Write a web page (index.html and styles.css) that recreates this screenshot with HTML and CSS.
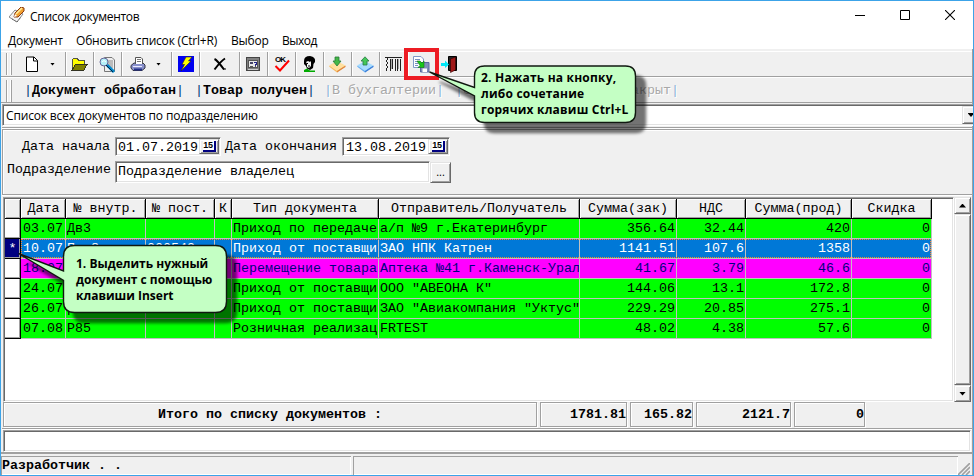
FILE: index.html
```
<!DOCTYPE html>
<html lang="ru">
<head>
    <meta charset="UTF-8">
    <title>Список документов</title>
    <link rel="stylesheet" href="styles.css">
</head>
<body>
    <div class="window">
        <!-- Title bar -->
        <header class="title-bar">
            <svg class="app-icon" width="16" height="16" viewBox="0 0 16 16">
                <path d="M0 10 6 3 14 7 8 15Z" fill="#f4f4f4" stroke="#8a8a8a"/>
                <path d="M3 12 8 15 12 10" fill="none" stroke="#555" stroke-dasharray="1 1"/>
                <path d="M5 10 6 6 12 0 15 1 15 4 9 10Z" fill="#f0a030" stroke="#8b3a10"/>
                <path d="M7 7 13 1" stroke="#fff0a0" stroke-width="1.5"/>
                <path d="M5 10 6 7 8 9Z" fill="#fff"/>
            </svg>
            <h1>Список документов</h1>
            <div class="win-buttons">
                <svg width="10" height="10" viewBox="0 0 10 10"><path d="M0 5.5H10" stroke="#000"/></svg>
                <svg width="10" height="10" viewBox="0 0 10 10"><path d="M.5 .5H9.5V9.5H.5Z" fill="none" stroke="#000"/></svg>
                <svg width="10" height="10" viewBox="0 0 10 10"><path d="M0 0 10 10M10 0 0 10" stroke="#000" stroke-width="1.1"/></svg>
            </div>
        </header>

        <nav class="menu">
            <span class="m-doc">Документ</span>
            <span class="m-refresh">Обновить список (Ctrl+R)</span>
            <span class="m-select">Выбор</span>
            <span class="m-exit">Выход</span>
        </nav>

        <main class="client">
            <!-- Icon toolbar -->
            <div class="toolbar">
                <i class="grip"></i>
                <div class="tool first">
                    <svg width="14" height="17" viewBox="0 0 14 17"><path d="M1.5 1H9L12.5 4.5V15.5H1.5Z" fill="#fff" stroke="#000"/><path d="M8.500 1V5H12.500" fill="none" stroke="#000"/></svg>
                    <i class="caret"></i>
                </div>
                <div class="tool">
                    <svg width="17" height="16" viewBox="0 0 17 16" shape-rendering="crispEdges"><path d="M1 13.500V4L3 2.500H6L8 4.500H13V8" fill="#ff0" stroke="#554"/><path d="M1 14 4.500 8.500H16L13 14Z" fill="#808000" stroke="#332"/></svg>
                </div>
                <div class="tool">
                    <svg width="17" height="17" viewBox="0 0 17 17"><path d="M5.500 1.500H13L15.500 4V15.500H5.500Z" fill="#eee" stroke="#777"/><path d="M8 5H14M8 7H14M8 9H14M8 11H14" stroke="#888"/><circle cx="5" cy="6" r="4" fill="#b4f0f8" stroke="#669"/><path d="M3 6Q5 3 7 6" stroke="#fff" fill="none"/><path d="M8 9 15 16" stroke="#08c" stroke-width="3"/><path d="M7 9 14 16" stroke="#024" stroke-width="1"/></svg>
                </div>
                <div class="tool print">
                    <svg width="16" height="16" viewBox="0 0 16 16"><path d="M1 9.500 4 7H13L15 9V12L12 14.500H3L1 12Z" fill="#8890cc" stroke="#334"/><path d="M5.500 8V1.500H11L12.500 3V8" fill="#fff" stroke="#555"/><path d="M7 3.500H11M7 5.500H11" stroke="#777"/><path d="M3 10.500H12" stroke="#e8e8ff"/><path d="M4 13.500H12" stroke="#223088" stroke-width="2"/></svg>
                    <i class="caret"></i>
                </div>
                <div class="tool">
                    <svg width="16" height="16" viewBox="0 0 16 16"><path d="M0 0H16V16H0Z" fill="#0000f0"/><path d="M8 1H14L10.500 5H13L3 15 6.500 8.500H4Z" fill="#ff0" stroke="#222" stroke-width=".6"/></svg>
                </div>
                <div class="tool wide">
                    <svg width="14" height="14" viewBox="0 0 14 14"><path d="M1.500 2Q4 3 11 12.500M12 1.500Q8 4 1.500 12.500" fill="none" stroke="#000" stroke-width="2"/><path d="M10 12H13" stroke="#000"/></svg>
                </div>
                <div class="tool">
                    <svg width="15" height="15" viewBox="0 0 15 15" shape-rendering="crispEdges"><path d="M.5 .5H13.500V13.500H.5Z" fill="#808080" stroke="#444"/><path d="M2.500 3.500H11.500V10.500H2.500Z" fill="#e8e8e8" stroke="#555"/><path d="M4 5H7V7H4Z" fill="#446"/><path d="M4 9H7M9 9H10" stroke="#555"/><path d="M8 5.500H10.500V7H9V8.500" fill="none" stroke="#228"/><path d="M2 12H12" stroke="#ccc"/></svg>
                </div>
                <div class="tool">
                    <svg width="16" height="18" viewBox="0 0 16 18"><text class="ok" x="1" y="7">OK</text><path d="M1.500 11 6 15.500 15 5.500" fill="none" stroke="red" stroke-width="2"/></svg>
                </div>
                <div class="tool">
                    <svg width="14" height="16" viewBox="0 0 14 16"><path d="M1 5Q1 0 7 0Q13 1 12 6L10.500 8 10 12 7 14 4 12.500 3 10 1 8Z" fill="#000"/><path d="M3 6 5 5 7 6 8 5 8 10 6 12 4 11 4 8Z" fill="#f4f4f4"/><path d="M3.500 7.500H5M5 10H7" stroke="#000"/><path d="M1 15.500V14L4 12.500 7 14.500H12V16H1Z" fill="#0a0"/></svg>
                </div>
                <div class="tool">
                    <svg width="17" height="17" viewBox="0 0 17 17"><path d="M0 10.500 8 6 16.500 10.500 8 16.500Z" fill="#f6b860"/><path d="M0 9.500 8 5 16.500 9.500 8 15Z" fill="#ffe0a0"/><path d="M8 15 16.500 9.500V11L8 16.500Z" fill="#e08840"/><path d="M6 1H10V5H12L8 10 4 5H6Z" fill="#44b848" stroke="#287838" stroke-width=".8"/></svg>
                </div>
                <div class="tool">
                    <svg width="17" height="17" viewBox="0 0 17 17"><path d="M0 10.500 8 6 16.500 10.500 8 16.500Z" fill="#60a8f0"/><path d="M0 9.500 8 5 16.500 9.500 8 15Z" fill="#a8dcff"/><path d="M8 15 16.500 9.500V11L8 16.500Z" fill="#4080d8"/><path d="M8 .8 12 5H10V9H6V5H4Z" fill="#44c858" stroke="#287848" stroke-width=".8"/></svg>
                </div>
                <div class="tool">
                    <svg width="17" height="16" viewBox="0 0 17 16" shape-rendering="crispEdges"><path d="M0 1.500H17M2.500 2V4M1.500 4V6M2.500 6V8M1.500 8V10M2.500 10V12M1.500 12V15M5.500 3V15M7.500 3V13M10.500 3V15M12.500 3V15M15.500 3V15" stroke="#222"/><path d="M6.500 3V13M13.500 3V13" stroke="#aaa"/></svg>
                </div>
                <div class="tool marked">
                    <svg width="17" height="17" viewBox="0 0 17 17"><path d="M.5 .5H8L10.500 3V11.500H.5Z" fill="#fff" stroke="#8098c8"/><path d="M2 3.500H7M2 5.500H6M2 7.500H5M2 9.500H5" stroke="#7890c0"/><path d="M7.500 6.500H16V16H7.500Z" fill="#8090b8" stroke="#5868a0"/><path d="M9.500 12.500H14V16H9.500Z" fill="#fff"/><path d="M4 5 7 5 9 7 11 5V11.500H5L7 9.500Z" fill="#18c818" stroke="#187018" stroke-width=".6"/></svg>
                </div>
                <div class="tool">
                    <svg width="17" height="17" viewBox="0 0 17 17"><path d="M7.500 .5H15.500V14.500H7.500Z" fill="#222" stroke="#000"/><path d="M9.500 3 14.500 1V14L9.500 16.500Z" fill="#a01818" stroke="#300" stroke-width=".6"/><path d="M0 7H4V4.500L8 8.500 4 12V10H0Z" fill="#00e8f8"/></svg>
                </div>
            </div>

            <!-- Status filter buttons -->
            <div class="toolbar states">
                <i class="grip"></i>
                <span class="state"><b>|</b>Документ обработан<b>|</b></span>
                <span class="state"><b>|</b>Товар получен<b>|</b></span>
                <span class="state off third"><b>|</b>В бухгалтерии<b>|</b></span>
                <span class="state off short"><b>|</b>О</span>
                <span class="state off last"><b>|</b>Закрыт<b>|</b></span>
            </div>

            <div class="combo sunken">
                <span>Список всех документов по подразделению</span>
                <div class="combo-btn raised"><i class="caret"></i></div>
            </div>
            <div class="divider"></div>

            <!-- Filter panel -->
            <section class="filter">
                <div class="filter-row dates">
                    <label>Дата начала</label>
                    <div class="date sunken"><span>01.07.2019</span><div class="cal raised"><em>15</em></div></div>
                    <label>Дата окончания</label>
                    <div class="date end sunken"><span>13.08.2019</span><div class="cal raised"><em>15</em></div></div>
                </div>
                <div class="filter-row">
                    <label>Подразделение</label>
                    <div class="dept sunken">Подразделение владелец</div>
                    <div class="dots raised">...</div>
                </div>
            </section>

            <!-- Documents -->
            <section class="docs">
                <div class="grid sunken">
                    <div class="row head">
                        <span></span><span>Дата</span><span>№ внутр.</span><span>№ пост.</span><span>К</span><span>Тип документа</span><span>Отправитель/Получатель</span><span>Сумма(зак)</span><span>НДС</span><span>Сумма(прод)</span><span>Скидка</span>
                    </div>
                    <div class="row">
                        <span></span><span>03.07</span><span>Дв3</span><span></span><span></span><span>Приход по передаче</span><span>а/п №9 г.Екатеринбург</span><span>356.64</span><span>32.44</span><span>420</span><span>0</span>
                    </div>
                    <div class="row selected">
                        <span>*</span><span>10.07</span><span>Прв8</span><span>000549</span><span></span><span>Приход от поставщи</span><span>ЗАО НПК Катрен</span><span>1141.51</span><span>107.6</span><span>1358</span><span>0</span>
                    </div>
                    <div class="row moved">
                        <span></span><span>18.07</span><span></span><span></span><span></span><span>Перемещение товара</span><span>Аптека №41 г.Каменск-Урал</span><span>41.67</span><span>3.79</span><span>46.6</span><span>0</span>
                    </div>
                    <div class="row">
                        <span></span><span>24.07</span><span></span><span></span><span></span><span>Приход от поставщи</span><span>ООО "АВЕОНА К"</span><span>144.06</span><span>13.1</span><span>172.8</span><span>0</span>
                    </div>
                    <div class="row">
                        <span></span><span>26.07</span><span>р84</span><span></span><span></span><span>Приход от поставщи</span><span>ЗАО "Авиакомпания "Уктус"</span><span>229.29</span><span>20.85</span><span>275.1</span><span>0</span>
                    </div>
                    <div class="row">
                        <span></span><span>07.08</span><span>Р85</span><span></span><span></span><span>Розничная реализац</span><span>FRTEST</span><span>48.02</span><span>4.38</span><span>57.6</span><span>0</span>
                    </div>
                </div>
                <div class="scrollbar">
                    <div class="arrow raised"><i class="caret up"></i></div>
                    <div class="thumb raised"></div>
                    <div class="arrow raised"><i class="caret"></i></div>
                </div>
            </section>

            <div class="totals">
                <div class="total-label">Итого по списку документов :</div>
                <div>1781.81</div>
                <div>165.82</div>
                <div>2121.7</div>
                <div>0</div>
            </div>
            <div class="divider low"></div>
            <div class="note sunken"></div>

            <footer class="status">
                <div>Разработчик . .</div>
                <div></div>
                <svg width="12" height="12" viewBox="0 0 12 12"><path d="M0 12 12 0M4 12 12 4M8 12 12 8" stroke="#a0a0a0" stroke-width="1.6"/></svg>
            </footer>
        </main>
    </div>

    <!-- Hints over the window -->
    <div class="red-frame"></div>
    <div class="hint hint-insert">
        <svg width="230" height="90" viewBox="0 0 230 90">
            <path class="bubble" d="M55.500 5.500H200.500Q211.500 5.500 211.500 16.500V61.500Q211.500 72.500 200.500 72.500H59.500Q48.500 72.500 48.500 61.500V40.500L3.500 13.500 48.500 31V16.500Q48.500 5.500 59.500 5.500Z"/>
        </svg>
        <p>1. Выделить нужный<br>документ с помощью<br>клавиши Insert</p>
    </div>
    <div class="hint hint-ctrl">
        <svg width="230" height="80" viewBox="0 0 230 80">
            <path class="bubble" d="M63.500 6H205.500Q215.500 6 215.500 16V52.500Q215.500 62.500 205.500 62.500H64.500Q54.500 62.500 54.500 52.500V36L9.500 12 54.500 27.500V16Q54.500 6 64.500 6Z"/>
        </svg>
        <p>2. Нажать на кнопку,<br>либо сочетание<br>горячих клавиш Ctrl+L</p>
    </div>
</body>
</html>
```

FILE: styles.css
```
* { box-sizing: border-box; margin: 0; padding: 0; }

body {
    position: relative;
    width: 974px;
    height: 476px;
    overflow: hidden;
    font-family: "Liberation Mono", monospace;
    font-size: 13.333px;
    color: #000;
}

i { display: block; }

.window {
    width: 974px;
    height: 476px;
    border: 1px solid #3ca3e8;
    background: #f0f0f0;
    overflow: hidden;
    display: flex;
    flex-direction: column;
}

/* Win95-like borders */
.sunken {
    background: #fff;
    border: 1px solid;
    border-color: #a0a0a0 #fff #fff #a0a0a0;
    box-shadow: inset 1px 1px #696969, inset -1px -1px #e3e3e3;
}

.raised {
    background: #f0f0f0;
    border: 1px solid;
    border-color: #e3e3e3 #696969 #696969 #e3e3e3;
    box-shadow: inset 1px 1px #fff, inset -1px -1px #a0a0a0;
}

/* Title and menu */
.title-bar {
    height: 30px;
    flex: none;
    background: #fff;
    display: flex;
    align-items: center;
    padding: 0 18px 0 8px;
}

.title-bar h1 {
    flex: 1;
    margin-left: 5px;
    font: 12px "Open Sans", sans-serif;
    letter-spacing: -0.28px;
}

.app-icon { margin-top: -2px; }

.win-buttons {
    display: flex;
    gap: 35px;
    margin-top: -2px;
}

.menu {
    height: 18px;
    flex: none;
    background: #fff;
    display: flex;
    padding-left: 7px;
    font: 12px/20px "Open Sans", sans-serif;
    white-space: nowrap;
}

.m-doc { width: 68px; letter-spacing: -0.2px; }
.m-refresh { width: 155px; letter-spacing: -0.2px; }
.m-select { width: 51px; letter-spacing: -0.2px; }
.m-exit { letter-spacing: -0.5px; }

.client {
    flex: 1;
    border-right: 1px solid #a0a0a0;
    padding-top: 2px;
    display: flex;
    flex-direction: column;
}

/* Toolbars */
.toolbar {
    height: 26px;
    flex: none;
    border-top: 1px solid #fff;
    border-bottom: 1px solid #a0a0a0;
    display: flex;
    padding-left: 5px;
}

.grip {
    width: 6px;
    height: 22px;
    margin: 1px 8px 0 0;
    border: solid #a0a0a0;
    border-width: 0 1px;
    background: linear-gradient(90deg, #fff 1px, #f0f0f0 1px 3px, #fff 3px);
}

.tool {
    width: 28px;
    height: 24px;
    border-left: 1px solid #a0a0a0;
    box-shadow: inset 1px 0 #fff;
    display: flex;
    align-items: center;
    justify-content: center;
}

.tool.first {
    width: 45px;
    border: 0;
    box-shadow: none;
    justify-content: flex-start;
    gap: 11px;
    padding-left: 5px;
}

.tool.print {
    width: 50px;
    justify-content: flex-start;
    gap: 10px;
    padding-left: 8px;
}

.tool.wide { width: 40px; }

.ok { font: bold 8px "Liberation Sans", sans-serif; letter-spacing: -1px; }

.caret {
    width: 5px;
    height: 3px;
    flex: none;
    background: #000;
    clip-path: polygon(0 0, 100% 0, 50% 100%);
}

.caret.up { clip-path: polygon(50% 0, 100% 100%, 0 100%); }

.states {
    padding-left: 5px;
    align-items: center;
    font-weight: bold;
    white-space: nowrap;
}

.state { margin-left: 4px; margin-right: 9px; }
.state + .state { margin-left: 2px; }
.state + .state.third { margin-left: 0; }
.state b { font-weight: normal; color: #004078; }
.state.off { color: #a8a8a8; font-weight: normal; text-shadow: 1px 1px #fff; }
.state.off b { color: #90b4d8; }
.state.short { margin-right: 0; }
.state + .state.last { margin-left: 144px; }

.combo {
    height: 22px;
    flex: none;
    width: 972px;
    margin: 1px 0 1px 1px;
    display: flex;
    align-items: center;
    justify-content: space-between;
    padding: 1px 0 1px 3px;
    font: 12px "Open Sans", sans-serif;
    letter-spacing: -0.15px;
}

.combo-btn {
    width: 18px;
    height: 18px;
    margin-right: -7px;
    display: flex;
    align-items: center;
    justify-content: center;
    flex: none;
}

.combo-btn .caret, .arrow .caret { width: 7px; height: 4px; }

.divider {
    height: 2px;
    flex: none;
    margin-left: 1px;
    border-top: 1px solid #a0a0a0;
    background: #fff;
}

.divider.low { margin-top: 1px; }

/* Filter */
.filter {
    height: 66px;
    flex: none;
    margin: 0 0 0 1px;
    border: solid #a0a0a0;
    border-width: 1px 0 1px 1px;
    box-shadow: 0 1px #fff, inset 1px 1px #fff;
    padding: 7px 0 0 4px;
}

.filter-row { display: flex; height: 22px; line-height: 18px; }
.filter-row label { width: 108px; white-space: nowrap; }
.filter-row.dates { height: 19px; margin-bottom: 5px; line-height: 19px; }
.dates label { padding-left: 15px; }
.dates label + .date + label { width: 121px; padding-left: 4px; }

.date {
    width: 106px;
    display: flex;
    padding: 1px 1px 1px 2px;
}

.date.end { width: 108px; padding-left: 3px; }
.date span { flex: 1; line-height: 17px; white-space: nowrap; }

.cal {
    width: 20px;
    height: 15px;
    flex: none;
    display: flex;
    align-items: center;
    justify-content: center;
}

.cal em {
    width: 13px;
    height: 11px;
    border: solid #000080;
    border-width: 0 2px 2px 0;
    background: #fff;
    font: bold 9px/9px "Liberation Sans", sans-serif;
    letter-spacing: -0.3px;
    text-align: center;
}

.dept { width: 315px; padding-left: 2px; line-height: 20px; }
.dots { width: 21px; margin-top: 1px; height: 21px; text-align: center; font: 11px/17px "Open Sans", sans-serif; }

/* Documents grid */
.docs {
    height: 205px;
    flex: none;
    margin: 2px 1px 0 2px;
    display: flex;
}

.grid { width: 951px; padding: 1px; }

.row {
    display: grid;
    grid-template-columns: 16px 45px 80px 69px 17px 147px 201px 97px 69px 106px 80px;
    width: 927px;
    height: 20px;
    line-height: 19px;
    background: #0f0;
}

.row span {
    border-right: 1px solid #c0c0c0;
    border-bottom: 1px solid #c0c0c0;
    padding: 0 1px;
    overflow: hidden;
    white-space: nowrap;
}

.row span:nth-child(2) { padding-left: 2px; }
.row span:nth-child(n+8) { text-align: right; }

.row span:first-child {
    border-color: #000;
    background: #fff;
    box-shadow: inset -1px -1px #a0a0a0;
}

.row.head span {
    background: #f0f0f0;
    border-color: #000;
    box-shadow: inset 1px 1px #fff, inset -1px -1px #a0a0a0;
    text-align: center;
}

.row.selected {
    background: #0078d7;
    color: #fff;
    position: relative;
}

.row.selected::after {
    content: "";
    position: absolute;
    inset: 0 1px 1px 16px;
    border: 1px dotted #ff8728;
}

.row.selected span:first-child { background: #000080; text-align: center; }

.row.moved { background: #f0f; color: #000080; }

.scrollbar {
    width: 17px;
    display: flex;
    flex-direction: column;
}

.arrow {
    height: 17px;
    display: flex;
    align-items: center;
    justify-content: center;
}

.thumb { flex: 1; }

/* Totals */
.totals {
    height: 25px;
    flex: none;
    display: grid;
    grid-template-columns: 534px 87px 63px 95px 71px;
    column-gap: 3px;
    margin-left: 2px;
    font-weight: bold;
    line-height: 24px;
    text-align: right;
}

.totals div { height: 25px; border: 1px solid #a0a0a0; box-shadow: inset 1px 1px #fff, 1px 1px #fff; }
.totals .total-label { padding-right: 154px; }

.note { height: 22px; flex: none; margin: 0 1px 0 2px; }

/* Status bar */
.status {
    flex: 1;
    border-top: 2px solid #a0a0a0;
    padding-top: 2px;
    display: grid;
    grid-template-columns: 350px 1fr 12px;
    column-gap: 2px;
    font-weight: bold;
    line-height: 17px;
}

.status div { border: solid #a0a0a0; border-width: 1px 0 0 1px; box-shadow: inset -1px -1px #fff; }
.status svg { align-self: end; margin-left: -2px; }

/* Hints */
.red-frame {
    position: absolute;
    left: 404px;
    top: 48px;
    width: 35px;
    height: 32px;
    border: 4px solid #ed1c24;
}

.hint { position: absolute; }
.hint svg { display: block; overflow: visible; }

.bubble {
    fill: #c4ffc4;
    stroke: #101810;
    stroke-width: 1.4;
    filter: drop-shadow(10px 10px 1.5px rgba(0, 0, 0, .55));
}

.hint p {
    position: absolute;
    font: bold 12px/16.2px "Open Sans", sans-serif;
    white-space: nowrap;
}

.hint-insert { left: 15px; top: 240px; }
.hint-insert p { left: 61px; top: 16px; }
.hint-ctrl { left: 420px; top: 60px; }
.hint-ctrl p { left: 61px; top: 10px; letter-spacing: 0.2px; }
```
